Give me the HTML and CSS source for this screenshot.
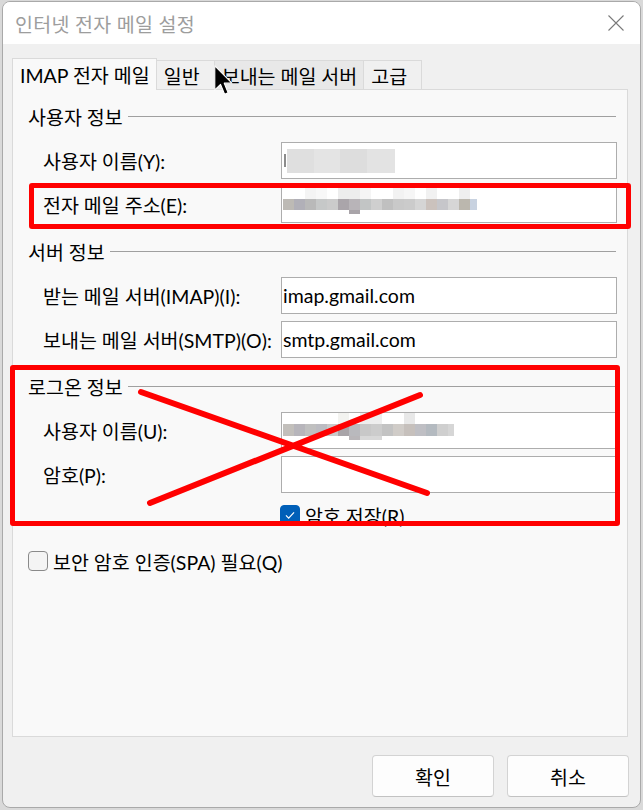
FILE: index.html
```html
<!DOCTYPE html>
<html lang="ko">
<head>
<meta charset="utf-8">
<title>인터넷 전자 메일 설정</title>
<link rel="stylesheet" href="styles.css">
</head>
<body>
<div class="window">
  <div class="titlebar">
    <span class="title">인터넷 전자 메일 설정</span>
    <svg class="close" viewBox="0 0 16 16"><path d="M0.5 0.5 L15.5 15.5 M15.5 0.5 L0.5 15.5" stroke="#7a7a7a" stroke-width="1.1" fill="none"/></svg>
  </div>
  <div class="content">
    <div class="tabs">
      <div class="tab active">IMAP 전자 메일</div>
      <div class="tab">일반</div>
      <div class="tab hover">보내는 메일 서버</div>
      <div class="tab">고급</div>
    </div>
    <div class="panel">
      <div class="group-head"><span class="group-label">사용자 정보</span><i class="rule"></i></div>
      <div class="field"><span class="label">사용자 이름(Y):</span><div class="input"><span class="mosaic m-user"></span></div></div>
      <div class="field"><span class="label">전자 메일 주소(E):</span><div class="input"><span class="mosaic m-email"></span></div></div>

      <div class="group-head"><span class="group-label">서버 정보</span><i class="rule"></i></div>
      <div class="field"><span class="label">받는 메일 서버(IMAP)(I):</span><div class="input">imap.gmail.com</div></div>
      <div class="field"><span class="label">보내는 메일 서버(SMTP)(O):</span><div class="input">smtp.gmail.com</div></div>

      <div class="group-head"><span class="group-label">로그온 정보</span><i class="rule"></i></div>
      <div class="field"><span class="label">사용자 이름(U):</span><div class="input"><span class="mosaic m-login"></span></div></div>
      <div class="field"><span class="label">암호(P):</span><div class="input"></div></div>
      <div class="check check-save"><span class="box on"><svg viewBox="0 0 20 20"><path d="M5.5 10.5 L8.5 13.5 L14.5 7" stroke="#fff" stroke-width="1.3" fill="none"/></svg></span><span>암호 저장(R)</span></div>

      <div class="check check-spa"><span class="box"></span><span>보안 암호 인증(SPA) 필요(Q)</span></div>
    </div>
  </div>
  <div class="footer">
    <button class="btn">확인</button>
    <button class="btn">취소</button>
  </div>

  <div class="mark mark-email"></div>
  <div class="mark mark-logon"></div>
  <svg class="cross" viewBox="0 0 643 810"><path d="M141 392 L427 493 M150 503 L420 395" stroke="#ff0000" stroke-width="6" stroke-linecap="round" fill="none"/></svg>
  <svg class="cursor" viewBox="0 0 12.5 20.5"><path d="M0.5 0.5 L0.5 16.5 L4.3 12.8 L7 19.3 L9.3 18.3 L6.7 12 L11.8 12 Z" fill="#000" stroke="#fff" stroke-width="0.7" stroke-linejoin="round"/></svg>
</div>
</body>
</html>
```

FILE: styles.css
```css
* { box-sizing: border-box; }

body {
  margin: 0;
  background: #d9d9d9;
  font-family: Lato, "Noto Sans CJK KR", sans-serif;
  font-size: 19.5px;
  color: #000;
}

.window {
  position: relative;
  margin: 1px 0 0 2px;
  width: 639px;
  height: 807px;
  border: 1px solid #a9a9a9;
  border-radius: 8px;
  overflow: hidden;
  background: #f0f0f0;
  display: flex;
  flex-direction: column;
}

.titlebar {
  height: 42px;
  flex: none;
  background: #fff;
  display: flex;
  align-items: center;
  justify-content: space-between;
  padding: 0 16px 0 12px;
}

.title {
  color: #9d9d9d;
  font-size: 19.5px;
  letter-spacing: 0.3px;
}

.close {
  width: 16px;
  height: 16px;
  display: block;
}

.content {
  flex: none;
  padding: 14px 12px 0 9px;
}

.tabs {
  display: flex;
  align-items: flex-end;
  height: 31px;
}

.tab {
  height: 29px;
  min-width: 58px;
  padding: 0 6px 0 7px;
  border-top: 1px solid #dadada;
  border-right: 1px solid #dadada;
  background: #f0f0f0;
  display: flex;
  align-items: center;
  white-space: nowrap;
}

.tab.active {
  height: 32px;
  margin-bottom: -1px;
  border-left: 1px solid #dadada;
  background: #f9f9f9;
  position: relative;
  z-index: 1;
}

.tab.hover {
  background: #e8e8e8;
}

.panel {
  height: 648px;
  background: #f9f9f9;
  border: 1px solid #dadada;
  padding: 14px 10px 0 15px;
  display: flex;
  flex-direction: column;
}

.group-head {
  display: flex;
  align-items: center;
  height: 24px;
  flex: none;
}

.group-label {
  white-space: nowrap;
}

.rule {
  flex: 1;
  height: 1px;
  background: #a0a0a0;
  margin-left: 5px;
  margin-right: 1px;
}

.field {
  display: grid;
  grid-template-columns: 253px 1fr;
  align-items: center;
  height: 37px;
  flex: none;
}

.group-head + .field { margin-top: 14px; }
.field + .field { margin-top: 7px; }
.field + .group-head { margin-top: 16px; }

.label {
  padding-left: 15px;
  white-space: nowrap;
}

.input {
  height: 37px;
  border: 1px solid #adadad;
  background: #fff;
  display: flex;
  align-items: center;
  padding-left: 1px;
}

.check {
  display: flex;
  align-items: center;
  gap: 5px;
  height: 20px;
  flex: none;
}

.check-save {
  margin-top: 12px;
  margin-left: 252px;
}

.check-spa {
  margin-top: 26px;
}

.box {
  width: 20px;
  height: 20px;
  border-radius: 4px;
  border: 1px solid #8a8a8a;
  background: #f4f4f4;
  flex: none;
}

.box.on {
  background: #005fb8;
  border-color: #005fb8;
}

.box svg {
  display: block;
  width: 18px;
  height: 18px;
}

.footer {
  flex: 1;
  display: flex;
  justify-content: flex-end;
  align-items: flex-start;
  gap: 13px;
  padding: 18px 11px 0 0;
}

.btn {
  width: 122px;
  height: 42px;
  border: 1px solid #d3d3d3;
  border-bottom-color: #c2c2c2;
  border-radius: 4px;
  background: #fdfdfd;
  font: inherit;
  color: #000;
  padding: 0;
}

/* blurred (pixelated) personal data */
.mosaic {
  display: block;
  flex: none;
}

.m-user {
  width: 112px;
  height: 24px;
  background:
    linear-gradient(#8c8c8c, #8c8c8c) 1px 5px / 2px 13px no-repeat,
    linear-gradient(to right, transparent 0 4px, #dfdfdf 4px 31px, #e4e4e4 31px 57px, #dddddd 57px 84px, #e3e3e3 84px 112px);
}

.m-email {
  width: 194px;
  height: 26px;
  align-self: flex-start;
  margin-top: 1px;
  background:
    linear-gradient(#a9a4a9, #a9a4a9) 66px 22px / 11px 4px no-repeat,
    linear-gradient(to right,
      #bdbab5 0 11px, #b1b0b8 11px 22px, #b9b9b9 22px 33px, #c6c8c8 33px 44px,
      #cbcbcb 44px 55px, #aaa5aa 55px 66px, #b8b4b8 66px 77px, #c2c5c5 77px 88px,
      #cfcfcf 88px 99px, #c0c0c0 99px 110px, #c9c9c9 110px 121px, #cbcbcb 121px 132px,
      #d5d5d5 132px 143px, #cbc2bd 143px 154px, #c6c6ca 154px 165px, #d6d6d6 165px 176px,
      #bbb7ae 176px 187px, #c8d2e0 187px 194px) 0 11px / 194px 11px no-repeat,
    linear-gradient(to right,
      transparent 0 22px, #f4f4f4 22px 33px, #f8f8f8 33px 44px, transparent 44px 55px,
      #ededed 55px 77px, #f5f5f5 77px 88px, transparent 88px 110px, #f2f2f2 110px 121px,
      #f6f6f6 121px 132px, transparent 132px 143px, #f1f1f1 143px 154px, transparent 154px 176px,
      #efefef 176px 187px, transparent 187px 194px) 0 0 / 194px 11px no-repeat;
}

.m-login {
  width: 171px;
  height: 27px;
  align-self: flex-start;
  background:
    linear-gradient(to right, transparent 0 66px, #b9b6b9 66px 77px, #d8d8d8 77px 99px, transparent 99px) 0 23px / 171px 4px no-repeat,
    linear-gradient(to right,
      #c2bfbb 0 11px, #b7b5bb 11px 22px, #c0c0c0 22px 33px, #bcbcc2 33px 44px,
      #c9c9c9 44px 55px, #a8a4a8 55px 66px, #b9b9bd 66px 77px, #c8c8c8 77px 88px,
      #cccccc 88px 99px, #c3c3c3 99px 110px, #d0ccc8 110px 121px, #c6c0bc 121px 132px,
      #bfbfc4 132px 143px, #b4bac0 143px 154px, #cfcfcf 154px 165px, #d6d6d6 165px 171px) 0 11px / 171px 12px no-repeat,
    linear-gradient(to right,
      transparent 0 55px, #f3f3f0 55px 66px, transparent 66px 77px, #eeeeee 77px 99px,
      transparent 99px 121px, #e8e8e8 121px 132px, transparent 132px) 0 0 / 171px 11px no-repeat;
}

/* annotations drawn over the dialog */
.mark {
  position: absolute;
  border: 5px solid #ff0000;
  border-radius: 3px;
  pointer-events: none;
}

.mark-email {
  left: 26px;
  top: 181px;
  width: 602px;
  height: 46px;
}

.mark-logon {
  left: 7px;
  top: 363px;
  width: 610px;
  height: 161px;
}

.cross {
  position: absolute;
  left: -3px;
  top: -2px;
  width: 643px;
  height: 810px;
  pointer-events: none;
}

.cursor {
  position: absolute;
  left: 211px;
  top: 63px;
  width: 19px;
  height: 31px;
}
```
